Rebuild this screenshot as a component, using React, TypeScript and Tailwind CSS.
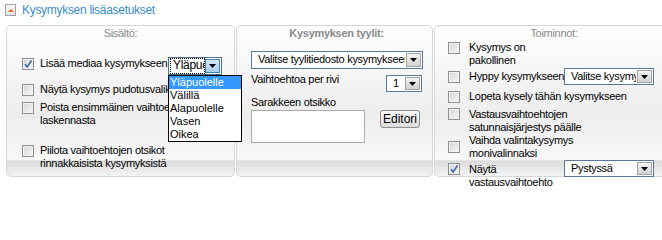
import React from "react";

const Box = ({ checked }: { checked?: boolean }) => (
    <span className="relative block w-[12px] h-[12px] shrink-0 border border-[#8e8f8f] bg-[linear-gradient(135deg,#d4d4d4,#f7f7f7)] shadow-[inset_0_0_0_1px_#f2f2f2]">
        {checked && (
            <svg viewBox="0 0 10 10" className="absolute inset-0 w-[10px] h-[10px]">
                <path d="M2 5.2 L4.2 8 L8.6 1.4" stroke="#3062a8" strokeWidth="1.5" fill="none" />
            </svg>
        )}
    </span>
);

const Arrow = ({ active }: { active?: boolean }) => (
    <span
        className={
            active
                ? "m-[1px] w-[15px] shrink-0 flex items-center justify-center border border-[#3c7fb1] bg-[linear-gradient(#d6e8f8,#a9cdef)]"
                : "m-[1px] w-[15px] shrink-0 flex items-center justify-center border border-[#a3a3a3] bg-[linear-gradient(#f4f4f4,#d2d2d2)]"
        }
    >
        <svg viewBox="0 0 7 4" className="w-[7px] h-[4px]">
            <path d="M0 0 H7 L3.5 4 Z" fill="#000" />
        </svg>
    </span>
);

const Select = ({ text, className }: { text: string; className: string }) => (
    <div className={`flex shrink-0 border border-[#58799a] bg-white ${className}`}>
        <span className="flex-1 overflow-hidden whitespace-nowrap pl-[6px] leading-[15px]">{text}</span>
        <Arrow />
    </div>
);

export default function App() {
    const panel =
        "h-[152px] shrink-0 rounded-[5px] border border-[#d6d6d6] bg-[linear-gradient(to_bottom,#ffffff_0%,#f6f6f6_30%,#ededed_60%,#f8f8f8_89%,#dcdcdc_90%,#f3f3f3_100%)]";

    return (
        <div className="w-[662px] h-[200px] overflow-hidden bg-white text-[11px] leading-[13px] tracking-[-0.3px] text-black font-['Liberation_Sans',Arial,sans-serif]">
            {/* header */}
            <div className="h-[25px] flex items-start pt-[4px] pl-[5px]">
                <span className="w-[11px] h-[12px] flex items-end justify-center pb-[3px] border border-[#a2a2a2] bg-[linear-gradient(#fbfbfb,#e4e4e4)]">
                    <svg viewBox="0 0 6 3" className="w-[6px] h-[3px]">
                        <path d="M0 3 L3 0 L6 3 Z" fill="#ec6a1e" />
                    </svg>
                </span>
                <span className="ml-[6px] text-[12px] leading-[13px] text-[#3a8cc6]">Kysymyksen lisäasetukset</span>
            </div>

            <div className="flex gap-[1px] pl-[6px]">
                {/* Sisältö */}
                <div className={`${panel} w-[229px]`}>
                    <div className="pt-[1px] text-center text-[#8a8a8a]">Sisältö:</div>

                    <div className="mt-[17px] flex items-start pl-[15px]">
                        <div className="mt-[1px]"><Box checked /></div>
                        <span className="ml-[6px] w-[128px] shrink-0 whitespace-nowrap">Lisää mediaa kysymykseen</span>
                        <div className="relative">
                            <div className="flex w-[54px] h-[18px] border border-[#4f6d8a] bg-white">
                                <span className="flex-1 overflow-hidden whitespace-nowrap ml-[2px] my-[1px] pl-[2px] leading-[13px] text-[12px] outline outline-1 outline-dotted outline-black">Yläpuolelle</span>
                                <Arrow active />
                            </div>
                            <div className="absolute left-0 top-[18px] z-10 w-[74px] border border-black bg-white text-[11px] leading-[13px] tracking-normal">
                                <div className="px-[1px] bg-[#3399ff] text-white">Yläpuolelle</div>
                                <div className="px-[1px]">Välillä</div>
                                <div className="px-[1px]">Alapuolelle</div>
                                <div className="px-[1px]">Vasen</div>
                                <div className="px-[1px]">Oikea</div>
                            </div>
                        </div>
                    </div>

                    <div className="mt-[8px] flex items-start pl-[15px]">
                        <div className="mt-[1px]"><Box /></div>
                        <span className="ml-[6px] whitespace-nowrap">Näytä kysymys pudotusvalikkona</span>
                    </div>

                    <div className="mt-[5px] flex items-start pl-[15px]">
                        <div className="mt-[1px]"><Box /></div>
                        <span className="ml-[6px] whitespace-nowrap">Poista ensimmäinen vaihtoehto<br />laskennasta</span>
                    </div>

                    <div className="mt-[17px] flex items-start pl-[15px]">
                        <div className="mt-[1px]"><Box /></div>
                        <span className="ml-[6px] whitespace-nowrap">Piilota vaihtoehtojen otsikot<br />rinnakkaisista kysymyksistä</span>
                    </div>
                </div>

                {/* Kysymyksen tyylit */}
                <div className={`${panel} w-[197px] pl-[14px] pr-[10px]`}>
                    <div className="pt-[1px] text-center font-bold text-[#8a8a8a]">Kysymyksen tyylit:</div>

                    <Select text="Valitse tyylitiedosto kysymykseen" className="mt-[11px] w-[172px] h-[18px]" />

                    <div className="mt-[4px] flex items-start justify-between">
                        <span className="whitespace-nowrap">Vaihtoehtoa per rivi</span>
                        <Select text="1" className="mt-[2px] w-[36px] h-[17px]" />
                    </div>

                    <div className="mt-[4px] whitespace-nowrap">Sarakkeen otsikko</div>

                    <div className="mt-[1px] flex items-start">
                        <div className="w-[114px] h-[33px] border border-[#ababab] bg-white"></div>
                        <button className="ml-[15px] w-[40px] h-[18px] rounded-[3px] border border-[#8d8d8d] bg-[linear-gradient(#fafafa,#dcdcdc)] text-[12px] leading-[14px] tracking-normal text-black">
                            Editori
                        </button>
                    </div>
                </div>

                {/* Toiminnot */}
                <div className={`${panel} w-[240px] pl-[13px]`}>
                    <div className="pt-[1px] pr-[13px] text-center text-[#8a8a8a]">Toiminnot:</div>

                    <div className="mt-[1px] flex items-start">
                        <div className="mt-[1px]"><Box /></div>
                        <span className="ml-[9px] whitespace-nowrap">Kysymys on<br />pakollinen</span>
                    </div>

                    <div className="mt-[1px] flex items-center h-[17px]">
                        <Box />
                        <span className="ml-[9px] w-[95px] shrink-0 whitespace-nowrap">Hyppy kysymykseen</span>
                        <Select text="Valitse kysymys" className="w-[90px] h-[17px]" />
                    </div>

                    <div className="mt-[5px] flex items-start">
                        <div className="mt-[1px]"><Box /></div>
                        <span className="ml-[9px] whitespace-nowrap">Lopeta kysely tähän kysymykseen</span>
                    </div>

                    <div className="mt-[5px] flex items-start">
                        <Box />
                        <span className="ml-[9px] whitespace-nowrap">Vastausvaihtoehtojen<br />satunnaisjärjestys päälle</span>
                    </div>

                    <div className="flex items-center">
                        <Box />
                        <span className="ml-[9px] whitespace-nowrap">Vaihda valintakysymys<br />monivalinnaksi</span>
                    </div>

                    <div className="mt-[3px] flex items-start">
                        <Box checked />
                        <span className="ml-[9px] w-[95px] shrink-0 whitespace-nowrap">Näytä<br />vastausvaihtoehto</span>
                        <Select text="Pystyssä" className="mt-[-3px] w-[90px] h-[17px]" />
                    </div>
                </div>
            </div>
        </div>
    );
}
